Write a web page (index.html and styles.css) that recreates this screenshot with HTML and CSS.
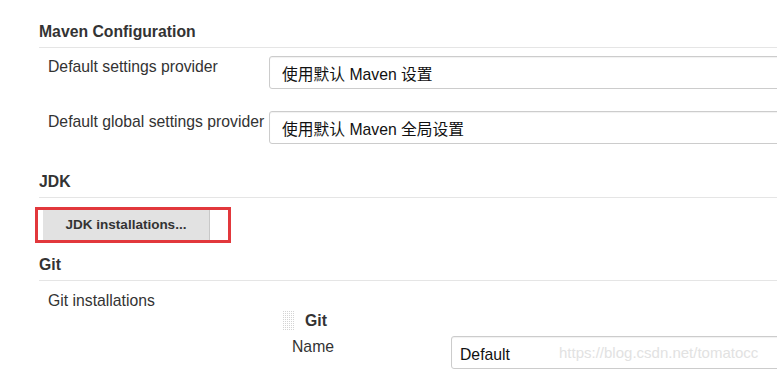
FILE: index.html
```html
<!DOCTYPE html>
<html lang="zh-CN">
<head>
    <meta charset="UTF-8">
    <meta name="viewport" content="width=device-width, initial-scale=1.0">
    <title>Configure System</title>
    <link rel="stylesheet" href="styles.css">
</head>
<body>
    <div class="page">
        <section class="section">
            <h2 class="section-title">Maven Configuration</h2>
            <div class="row">
                <label class="row-label">Default settings provider</label>
                <div class="field"><div class="select-box">使用默认 Maven 设置</div></div>
            </div>
            <div class="row row-next">
                <label class="row-label">Default global settings provider</label>
                <div class="field"><div class="select-box">使用默认 Maven 全局设置</div></div>
            </div>
        </section>

        <section class="section section-jdk">
            <h2 class="section-title">JDK</h2>
            <div class="button-wrap">
                <button class="btn" type="button">JDK installations...</button>
                <span class="highlight"></span>
            </div>
        </section>

        <section class="section section-git">
            <h2 class="section-title">Git</h2>
            <div class="row">
                <label class="row-label">Git installations</label>
            </div>
            <div class="repeated">
                <div class="repeated-head">
                    <span class="handle"></span>
                    <span class="repeated-title">Git</span>
                </div>
                <div class="sub-row">
                    <label class="sub-label">Name</label>
                    <div class="field">
                        <div class="text-box">Default</div>
                        <span class="watermark">https://blog.csdn.net/tomatocc</span>
                    </div>
                </div>
            </div>
        </section>
    </div>
</body>
</html>
```

FILE: styles.css
```css
/* Global Styles */
html, body {
    margin: 0;
    padding: 0;
    background: #fff;
    overflow: hidden;
}

body {
    font-family: 'Liberation Sans', Arial, 'Noto Sans CJK SC', sans-serif;
    font-size: 15.75px;
    line-height: 18px;
    color: #333;
}

.page {
    padding: 23px 0 0 39px;
    overflow: hidden;
}

.section-title {
    margin: 0;
    padding-bottom: 6px;
    font-size: 15.75px;
    line-height: 18px;
    font-weight: bold;
    color: #333;
    border-bottom: 1px solid #e5e5e5;
}

.row {
    display: grid;
    grid-template-columns: 221px 1fr;
    padding-left: 9px;
    margin-top: 8px;
}

.row-next {
    margin-top: 22px;
}

.row-label {
    display: block;
    margin-top: 2px;
    white-space: nowrap;
}

.field {
    position: relative;
    width: 620px;
}

.select-box, .text-box {
    height: 33px;
    box-sizing: border-box;
    border: 1px solid #ccc;
    border-radius: 3px;
    box-shadow: inset 0 1px 1px rgba(0, 0, 0, 0.06);
    padding: 9px 0 0 12px;
    color: #111;
    white-space: nowrap;
}

.section-jdk {
    margin-top: 29px;
}

.button-wrap {
    position: relative;
    margin: 10px 0 0 4px;
    height: 33px;
}

.btn {
    display: block;
    width: 167px;
    height: 33px;
    padding: 0;
    border: none;
    border-right: 1px solid #c8c8c8;
    background: #e2e2e2;
    font-family: 'Liberation Sans', Arial, sans-serif;
    font-size: 13.5px;
    font-weight: bold;
    color: #333;
}

/* red annotation frame drawn over the button */
.highlight {
    position: absolute;
    left: -8px;
    top: -1px;
    width: 196px;
    height: 36px;
    box-sizing: border-box;
    border: 3px solid #e2383c;
}

.section-git {
    margin-top: 15px;
}

.section-git .row {
    margin-top: 9px;
}

.repeated {
    margin: 1px 0 0 244px;
}

.repeated-head {
    display: flex;
    align-items: center;
    gap: 10px;
    height: 19px;
}

.handle {
    width: 12px;
    height: 19px;
    background-image:
        linear-gradient(90deg, transparent 1px, #fff 1px),
        linear-gradient(#d4d4d4 1px, #fff 1px);
    background-size: 2px 2px;
}

.repeated-title {
    font-weight: bold;
    color: #333;
}

.sub-row {
    display: grid;
    grid-template-columns: 159px 1fr;
    padding-left: 9px;
    margin-top: 6px;
}

.sub-label {
    display: block;
    margin-top: 2px;
}

.text-box {
    padding-left: 8px;
}

.watermark {
    position: absolute;
    left: 108px;
    top: 8px;
    font-size: 15px;
    color: #e2e2e2;
    white-space: nowrap;
}
```
